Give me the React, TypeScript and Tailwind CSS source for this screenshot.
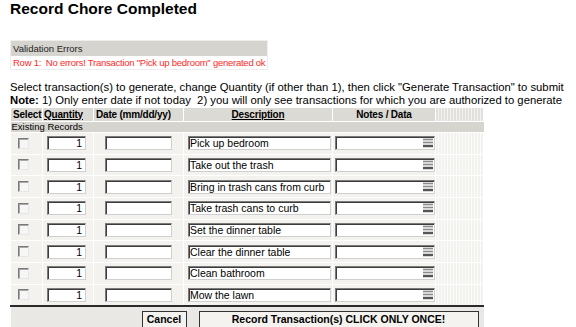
import React from "react";

const chores = [
  "Pick up bedroom",
  "Take out the trash",
  "Bring in trash cans from curb",
  "Take trash cans to curb",
  "Set the dinner table",
  "Clear the dinner table",
  "Clean bathroom",
  "Mow the lawn",
];

// classic sunken input look
const inset =
  "border border-t-[#7b7b7b] border-l-[#7b7b7b] border-b-[#cfcfcf] border-r-[#cfcfcf] shadow-[inset_1px_1px_0_#3c3c3c] bg-white";

function Checkbox() {
  return (
    <div className="h-[11px] w-[11px] border border-t-[#7a7a7a] border-l-[#7a7a7a] border-b-[#e6e6e6] border-r-[#e6e6e6] bg-[#f6f6f6] shadow-[inset_1px_1px_0_#a8a8a8]" />
  );
}

function NotesBox() {
  return (
    <div className={`${inset} flex h-[14px] w-[100px] items-center justify-end pr-[1px]`}>
      <div className="flex h-[10px] w-[10px] flex-col justify-center gap-[2px] bg-[#d8d8d8]">
        <div className="h-[1px] bg-[#8a8a8a]" />
        <div className="h-[1px] bg-[#8a8a8a]" />
        <div className="h-[2px] bg-[#555]" />
      </div>
    </div>
  );
}

function Row({ label }: { label: string }) {
  return (
    <tr className="h-[21.67px] bg-[#f3f2ef]">
      <td className="border border-white pl-[7px]">
        <Checkbox />
      </td>
      <td className="border border-white pl-[4px]">
        <div className={`${inset} h-[14px] w-[39px] pr-[3px] text-right text-[10.5px] leading-[12px]`}>
          1
        </div>
      </td>
      <td className="border border-white pl-[11px]">
        <div className={`${inset} h-[14px] w-[67px]`} />
      </td>
      <td className="border border-white pl-[4px]">
        <div className={`${inset} h-[14px] w-[143px] overflow-hidden pl-[1px] text-[10.5px] leading-[12px] whitespace-nowrap`}>
          {label}
        </div>
      </td>
      <td className="border border-white pl-[2px]">
        <NotesBox />
      </td>
      <td className="border border-white bg-[repeating-linear-gradient(90deg,#e9e8e4_0_1px,#fbfbfa_1px_3px)]" />
    </tr>
  );
}

export default function App() {
  return (
    <div className="h-[327px] w-[576px] overflow-hidden bg-white pl-[10px] font-['Liberation_Sans',Arial,sans-serif] text-black">
      <h1 className="pt-[1px] text-[15.5px] font-bold leading-[16px]">Record Chore Completed</h1>

      <div className="mt-[23px] w-[258px] border border-[#eeeeee]">
        <div className="bg-[#d6d4cf] px-[2px] text-[9.5px] leading-[15px] text-[#222]">
          Validation Errors
        </div>
        <div className="whitespace-nowrap px-[2px] text-[9.5px] leading-[13px] tracking-[-0.25px] text-[#ff2a2a]">
          Row 1:&nbsp; No errors! Transaction "Pick up bedroom" generated ok
        </div>
      </div>

      <p className="mt-[11px] whitespace-nowrap text-[11.3px] leading-[13px]">
        Select transaction(s) to generate, change Quantity (if other than 1), then click "Generate Transaction" to submit
      </p>
      <p className="whitespace-nowrap text-[11.3px] leading-[13px]">
        <b>Note:</b> 1) Only enter date if not today&nbsp; 2) you will only see transactions for which you are authorized to generate
      </p>

      <table className="w-[473px] table-fixed border-collapse text-[11px]">
        <colgroup>
          <col className="w-[32px]" />
          <col className="w-[51px]" />
          <col className="w-[90px]" />
          <col className="w-[149px]" />
          <col className="w-[103px]" />
          <col className="w-[48px]" />
        </colgroup>
        <thead>
          <tr className="h-[14px] bg-[#dcdad5] text-[10px] font-bold leading-[12px] tracking-[-0.2px] whitespace-nowrap">
            <th className="border border-white pl-[2px] text-left">Select</th>
            <th className="border border-white px-[1px] text-left underline">Quantity</th>
            <th className="border border-white px-[2px] text-left">Date (mm/dd/yy)</th>
            <th className="border border-white text-center underline">Description</th>
            <th className="border border-white text-center">Notes / Data</th>
            <th className="border border-white bg-[repeating-linear-gradient(90deg,#cfcdc8_0_1px,#f4f3f1_1px_3px)]" />
          </tr>
        </thead>
        <tbody>
          <tr className="h-[11px] bg-[#d6d4cf]">
            <td colSpan={6} className="px-[1px] text-[9.5px] leading-[10px]">
              Existing Records
            </td>
          </tr>
          {chores.map((c) => (
            <Row key={c} label={c} />
          ))}
        </tbody>
        <tfoot>
          <tr className="border-t-2 border-[#2b2b2b] bg-[#e9e8e4]">
            <td colSpan={6} className="h-[24px] pt-[4px] align-top">
              <div className="flex gap-[12px] pl-[131px]">
                <button className="h-[17px] w-[45px] border border-[#333] bg-[#f4f3ef] text-[10.5px] font-bold leading-[13px]">
                  Cancel
                </button>
                <button className="h-[17px] w-[280px] border border-[#333] bg-[#f4f3ef] text-[10.5px] font-bold leading-[13px]">
                  Record Transaction(s) CLICK ONLY ONCE!
                </button>
              </div>
            </td>
          </tr>
        </tfoot>
      </table>
    </div>
  );
}
